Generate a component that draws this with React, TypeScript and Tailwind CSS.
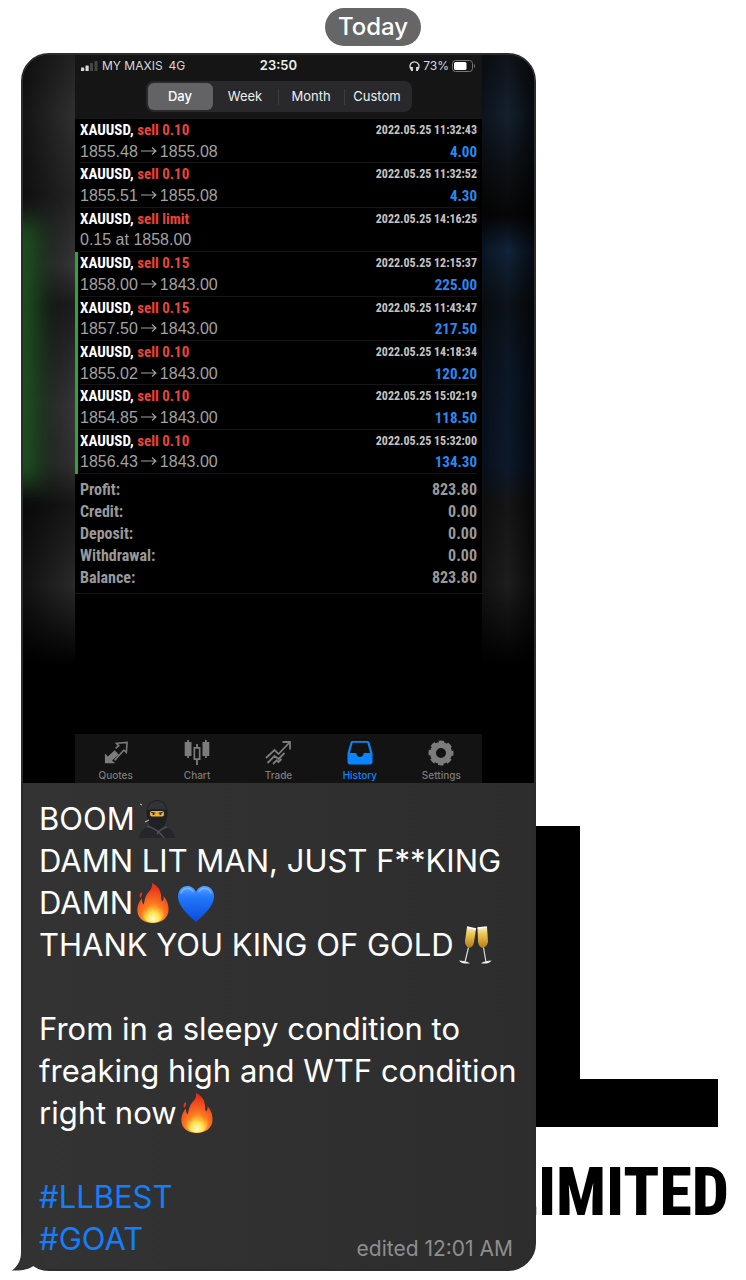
import React, { useState } from "react";

interface Trade {
  action: string;
  detail: React.ReactNode;
  time: string;
  profit?: string;
  closed?: boolean;
}

const Arrow: React.FC = () => (
  <svg viewBox="0 0 16 10" className="mx-[3px] inline-block h-[10px] w-[16px] align-baseline" fill="none" stroke="currentColor" strokeWidth="1.1">
    <path d="M0 4h15M11 0.500L15 4l-4 3.500" />
  </svg>
);

const range = (from: string, to: string) => (
  <>
    {from}
    <Arrow />
    {to}
  </>
);

const trades: Trade[] = [
  { action: "sell 0.10", detail: range("1855.48", "1855.08"), time: "2022.05.25 11:32:43", profit: "4.00" },
  { action: "sell 0.10", detail: range("1855.51", "1855.08"), time: "2022.05.25 11:32:52", profit: "4.30" },
  { action: "sell limit", detail: "0.15 at 1858.00", time: "2022.05.25 14:16:25" },
  { action: "sell 0.15", detail: range("1858.00", "1843.00"), time: "2022.05.25 12:15:37", profit: "225.00", closed: true },
  { action: "sell 0.15", detail: range("1857.50", "1843.00"), time: "2022.05.25 11:43:47", profit: "217.50", closed: true },
  { action: "sell 0.10", detail: range("1855.02", "1843.00"), time: "2022.05.25 14:18:34", profit: "120.20", closed: true },
  { action: "sell 0.10", detail: range("1854.85", "1843.00"), time: "2022.05.25 15:02:19", profit: "118.50", closed: true },
  { action: "sell 0.10", detail: range("1856.43", "1843.00"), time: "2022.05.25 15:32:00", profit: "134.30", closed: true },
];

const summary = [
  ["Profit:", "823.80"],
  ["Credit:", "0.00"],
  ["Deposit:", "0.00"],
  ["Withdrawal:", "0.00"],
  ["Balance:", "823.80"],
];

const periods = ["Day", "Week", "Month", "Custom"];

const QuotesIcon = (
  <svg viewBox="0 0 26 26" className="size-[24px]" fill="none">
    <path d="M1 24V13.500l3.200 3.200 7.300-6.700 4.500 4.500-7.300 6.700L12 24z" fill="currentColor" />
    <path d="M12.500 8l3.500-3-2.500-2.500L25 1.500l-.8 11-2.700-2.700L11.500 21" stroke="currentColor" strokeWidth="1.700" />
  </svg>
);

const ChartIcon = (
  <svg viewBox="0 0 26 26" className="size-[26px]" fill="currentColor">
    <path d="M3.200 0h1.800v2H7.500v14H5v2H3.200v-2H.7V2h2.500zM21 0h1.800v2h2.500v14h-2.500v2H21v-2h-2.500V2H21z" />
    <path d="M12.100 4h1.800v3h2.600v13h-2.600v5h-1.800v-5H9.500V7h2.600zM11.200 8.700v9.600h3.600V8.700z" fillRule="evenodd" />
  </svg>
);

const TradeIcon = (
  <svg viewBox="0 0 26 26" className="size-[26px]" fill="none" stroke="currentColor" strokeWidth="1.800">
    <path d="M1 18l8.500-8 4 4L24 3M17.500 2h7.500v7.500" />
    <path d="M2.500 23l7-7 4 3 6-6M8 24l3.500-3.500 2 1.500 3-3" />
  </svg>
);

const HistoryIcon = (
  <svg viewBox="0 0 26 26" className="size-[26px]" fill="currentColor" fillRule="evenodd">
    <path d="M5.500 1h15c1 0 1.700.6 2 1.500L25.500 13v9c0 1.500-1 2.500-2.500 2.500H3C1.500 24.500.5 23.500.5 22v-9L3.500 2.500C3.800 1.600 4.500 1 5.500 1zM5.700 2.700L2.800 13h6c.4 0 .7.4.7.8 0 1.800 1.500 3.300 3.500 3.300s3.500-1.500 3.500-3.300c0-.4.300-.8.700-.8h6L20.300 2.700z" />
  </svg>
);

const SettingsIcon = (
  <svg viewBox="0 0 26 26" className="size-[26px]" fill="none" stroke="currentColor">
    <circle cx="13" cy="13" r="8" strokeWidth="6" />
    <circle cx="13" cy="13" r="11.200" strokeWidth="2.600" strokeDasharray="5.300 3.496" strokeDashoffset="2.600" />
  </svg>
);

const tabs = [
  { name: "Quotes", icon: QuotesIcon },
  { name: "Chart", icon: ChartIcon },
  { name: "Trade", icon: TradeIcon },
  { name: "History", icon: HistoryIcon },
  { name: "Settings", icon: SettingsIcon },
];

const Fire: React.FC = () => (
  <svg viewBox="0 0 32 40" className="h-[40px] w-[32px]" role="img" aria-label="fire">
    <defs>
      <radialGradient id="flame" cx="0.5" cy="0.9" r="0.8">
        <stop offset="0.2" stopColor="#ffb52b" />
        <stop offset="0.5" stopColor="#fd7620" />
        <stop offset="1" stopColor="#e8321c" />
      </radialGradient>
      <radialGradient id="core" cx="0.5" cy="0.85" r="0.65">
        <stop offset="0" stopColor="#fffbd0" />
        <stop offset="0.45" stopColor="#ffe34a" />
        <stop offset="1" stopColor="#ff8a24" stopOpacity="0.3" />
      </radialGradient>
    </defs>
    <path d="M15 0c6 3 8.500 7 9 12 .2 3 0 5 1 6.500 1.500-1 1.800-3.500 1.500-5.500 4 4.500 5.500 9.500 5 15-.6 7-7 12-15.500 12S.8 35.500.4 28.500C0 22.500 2.500 18 5 15.500c0 3 .3 5 1.800 6C8 15 9 11.500 12.500 8 14.800 5.600 15.500 3 15 0z" fill="url(#flame)" />
    <path d="M4.500 9c1.500 2.500 0 4-1.200 6-1.500-2-.8-4.500 1.200-6z" fill="#e8321c" />
    <path d="M17 16c.5 5 5 7.500 6.500 11 .8-1 1-2.500.8-4 3 4 3.500 8.500 1 12-2 3-5.500 4.500-9.500 4.500-5 0-9-2.500-10.300-6.500-1-3.500 0-6 2-8.500.2 2 .8 3.500 2 4.500C10 24 15.500 21 17 16z" fill="url(#core)" />
  </svg>
);

const BlueHeart: React.FC = () => (
  <svg viewBox="0 0 38 37" className="h-[37px] w-[38px]" role="img" aria-label="blue heart">
    <defs>
      <linearGradient id="heart" x1="0" y1="0" x2="0" y2="1">
        <stop offset="0" stopColor="#5aa5ff" />
        <stop offset="0.3" stopColor="#2478fb" />
        <stop offset="1" stopColor="#0b4bdc" />
      </linearGradient>
    </defs>
    <path d="M19 37C12 30.500 1 21.500 1 11.500 1 5 5.500 1 10.500 1c4 0 7 2.500 8.500 6 1.500-3.500 4.500-6 8.500-6C32.500 1 37 5 37 11.500 37 21.500 26 30.500 19 37z" fill="url(#heart)" />
    <path d="M4 8c2-5 9-6.500 12-1.500M22 6.500C25 1.500 32 3 34 8" fill="none" stroke="#8cc4ff" strokeWidth="1.500" strokeLinecap="round" opacity="0.6" />
  </svg>
);

const Ninja: React.FC = () => (
  <svg viewBox="0 0 36 38" className="h-[38px] w-[36px]" role="img" aria-label="ninja">
    <path d="M0 38c1-7 5-10 11-11h14c6 1 10 4 11 11z" fill="#24262a" />
    <path d="M18 0C11.500 0 7.500 5 7.500 13c0 9 4.500 17 10.500 17s10.500-8 10.500-17C28.500 5 24.500 0 18 0z" fill="#1f2125" />
    <path d="M12 3c3.500-2.500 9-2.500 12 0 2 2 3 4.500 3.300 7-5-1.500-13.500-1.500-18.600 0C9 7.500 10 5 12 3z" fill="#303337" />
    <rect x="11" y="11" width="14" height="5.500" rx="1.800" fill="#f0b32c" />
    <path d="M12 12.200l4.500.9M24 12.200l-4.500.9" stroke="#493114" strokeWidth="1" />
    <circle cx="14.500" cy="14" r="1.100" fill="#332210" />
    <circle cx="21.500" cy="14" r="1.100" fill="#332210" />
    <path d="M8 26c7 2 13 6 17 12M28 27c-4 1-8 4-10 7" fill="none" stroke="#4c5056" strokeWidth="1.500" />
    <path d="M6 22l4-2M1 4l2 1" stroke="#c8cdd2" strokeWidth="1" />
  </svg>
);

const Glasses: React.FC = () => (
  <svg viewBox="0 0 34 38" className="h-[38px] w-[34px]" role="img" aria-label="clinking glasses">
    <defs>
      <linearGradient id="fizz" x1="0" y1="0" x2="0" y2="1">
        <stop offset="0" stopColor="#f8efcd" />
        <stop offset="0.35" stopColor="#edc654" />
        <stop offset="1" stopColor="#b57d16" />
      </linearGradient>
    </defs>
    <path d="M9 1l9 2-2 13c-.5 4-3 6-5 5.600S7 19 7 15z" fill="url(#fizz)" />
    <path d="M29 1l-9.500 1 .5 13.500c.4 4 2.600 6.500 4.800 6.300S29.500 19 30 15.500z" fill="url(#fizz)" />
    <path d="M9 1l9 2M19.500 2L29 1" stroke="#fff" strokeWidth="1.300" />
    <path d="M10.500 21.500L7 36M25.500 21.500L28 36" stroke="#d9dce0" strokeWidth="1.200" />
    <path d="M1 34.500c3 0 8 1 11 2.800-4 .8-9 .2-11-2.800zM33.500 34.500c-3 0-8 1-10.500 2.800 4 .8 8.500.2 10.500-2.800z" fill="#eceef0" />
  </svg>
);

const StatusBar: React.FC = () => (
  <div className="grid h-[22px] grid-cols-3 items-center px-[6px] text-xs text-[#d8d8d8]">
    <div className="flex items-center gap-1 whitespace-nowrap">
      <svg viewBox="0 0 17 10" className="h-[10px] w-[17px]" fill="currentColor">
        <rect x="0" y="6.500" width="3.200" height="3.500" rx="0.5" />
        <rect x="4.500" y="4.500" width="3.200" height="5.500" rx="0.5" />
        <rect x="9" y="2" width="3" height="8" rx="0.5" opacity="0.25" />
        <rect x="13.500" y="0" width="3" height="10" rx="0.5" opacity="0.25" />
      </svg>
      <span>MY MAXIS</span>
      <span className="ml-[2px]">4G</span>
    </div>
    <span className="text-center text-[13px] font-semibold text-[#eeeeee]">23:50</span>
    <div className="flex items-center justify-end gap-[3px]">
      <svg viewBox="0 0 12 12" className="size-[11px]" fill="none" stroke="currentColor" strokeWidth="1.500">
        <path d="M2.500 9.500C-.5 5 2 1 6 1s6.500 4 3.500 8.500" />
        <path d="M3.200 6.500v4.500M8.800 6.500v4.500" strokeWidth="2.200" />
      </svg>
      <span>73%</span>
      <svg viewBox="0 0 24 12" className="h-[12px] w-[24px]" fill="none">
        <rect x="0.5" y="0.5" width="20" height="11" rx="3" stroke="#777777" />
        <rect x="2" y="2" width="12.500" height="8" rx="1.500" fill="#ffffff" />
        <path d="M22 4v4c1.500-.6 1.500-3.400 0-4z" fill="#777777" />
      </svg>
    </div>
  </div>
);

const TradeScreen: React.FC = () => {
  const [period, setPeriod] = useState<string>("Day");
  const [tab, setTab] = useState<string>("History");

  return (
    <div className="flex min-w-0 flex-1 flex-col bg-black">
      <div className="bg-[#151515] pb-[7px]">
        <StatusBar />
        <div className="mx-auto mt-[4px] flex h-[31px] w-[266px] items-center rounded-lg bg-[#29292b] p-[2px]">
          {periods.map((name, i) => (
            <React.Fragment key={name}>
              {i > 1 && <span className="h-[16px] w-px bg-[#3c3c3e]" />}
              <button
                type="button"
                aria-pressed={period === name}
                onClick={() => setPeriod(name)}
                className={
                  period === name
                    ? "h-full flex-1 rounded-md bg-[#636366] text-[13px] font-medium text-white"
                    : "h-full flex-1 text-[13px] text-[#eeeeee]"
                }
              >
                {name}
              </button>
            </React.Fragment>
          ))}
        </div>
      </div>

      <ul className="flex h-[355px] flex-col font-['Roboto_Condensed','Liberation_Sans',sans-serif] text-[15px] leading-[20px]">
        {trades.map((trade) => (
          <li
            key={trade.time}
            className={
              trade.closed
                ? "flex flex-1 flex-col border-l-[3px] border-[#28a83c] pr-[5px] pl-[2px]"
                : "flex flex-1 flex-col pr-[5px] pl-[5px]"
            }
          >
            <div className="flex h-[22px] items-center justify-between font-bold">
              <span className="text-white">
                XAUUSD, <span className="text-[#e8453c]">{trade.action}</span>
              </span>
              <span className="text-[12px] text-[#c4c4c4]">{trade.time}</span>
            </div>
            <div className="flex flex-1 items-center justify-between border-b border-[#161616]">
              <span className="font-['Liberation_Sans',sans-serif] text-[16px] text-[#a2a2a2]">{trade.detail}</span>
              {trade.profit && <span className="font-bold text-[#2d87f0]">{trade.profit}</span>}
            </div>
          </li>
        ))}
      </ul>

      <dl className="border-b border-[#161616] px-[5px] pt-[5px] pb-[4px] font-['Roboto_Condensed','Liberation_Sans',sans-serif] text-[16px] leading-[22px] font-bold text-[#999999]">
        {summary.map(([label, value]) => (
          <div key={label} className="flex justify-between">
            <dt>{label}</dt>
            <dd>{value}</dd>
          </div>
        ))}
      </dl>

      <nav className="mt-[140px] grid grid-cols-5 bg-[#131313] pt-[6px]">
        {tabs.map(({ name, icon }) => (
          <button
            key={name}
            type="button"
            onClick={() => setTab(name)}
            className={
              tab === name
                ? "flex flex-col items-center gap-[2px] text-[10px] leading-[15px] font-medium text-[#0a84ff]"
                : "flex flex-col items-center gap-[2px] text-[10px] leading-[15px] font-medium text-[#7c7c7c]"
            }
          >
            <span className="flex size-[26px] items-center justify-center">{icon}</span>
            {name}
          </button>
        ))}
      </nav>
    </div>
  );
};

const Line: React.FC<{ children?: React.ReactNode }> = ({ children }) => (
  <p className="flex h-[42px] items-center gap-1 whitespace-nowrap">{children}</p>
);

const Message: React.FC = () => (
  <article className="relative z-10 col-start-1 row-start-1 mr-[210px] ml-[21px] min-w-0">
    <div className="overflow-hidden rounded-[28px] border-2 border-[#2c2c2c] bg-linear-to-r from-[#333333] to-[#2d2d2d]">
      <div className="flex bg-black">
        <div className="w-[52px] shrink-0 overflow-hidden bg-[linear-gradient(to_right,#00000099,transparent),linear-gradient(#222222,#303030_60px,#242424_140px,#363636_210px,#1c1c1c_250px,#363636_350px,#303030_410px,#161616_450px,#2a2a2a_530px,#000000_610px)]">
          <div className="mt-[165px] -ml-[20px] h-[265px] w-[36px] bg-[#1e5522] blur-[12px]" />
        </div>
        <TradeScreen />
        <div className="w-[52px] shrink-0 bg-[linear-gradient(to_right,#00000066,transparent_50%,#000000aa),linear-gradient(#10141a,#14202e_60px,#0b0d10_130px,#060606_160px,#10233a_195px,#0d1218_250px,#0c1726_310px,#0d192b_410px,#151515_450px,#1d1d1d_530px,#000000_610px)]" />
      </div>
      <div className="px-4 pt-[15px] text-[31px] leading-[42px] text-white">
        <Line>
          BOOM
          <Ninja />
        </Line>
        <Line>DAMN LIT MAN, JUST F**KING</Line>
        <Line>
          DAMN
          <Fire />
          <span className="ml-1">
            <BlueHeart />
          </span>
        </Line>
        <Line>
          THANK YOU KING OF GOLD
          <Glasses />
        </Line>
        <Line />
        <Line>From in a sleepy condition to</Line>
        <Line>freaking high and WTF condition</Line>
        <Line>
          right now
          <Fire />
        </Line>
        <Line />
        <Line>
          <a href="#llbest" className="text-[#147efb]">#LLBEST</a>
        </Line>
        <div className="flex h-[51px] justify-between">
          <a href="#goat" className="text-[#147efb]">#GOAT</a>
          <span className="self-end pr-[5px] pb-[5px] text-[21px] leading-[30px] text-[#8e8e8e]">edited 12:01 AM</span>
        </div>
      </div>
    </div>
    {/* bubble tail */}
    <svg viewBox="0 0 40 32" className="absolute bottom-0 -left-[9px] h-[32px] w-[40px]" fill="#323232">
      <path d="M9 0v13c0 8-3 14-9 18.500 9 .5 17-1 22-5 4 2.500 6 4 12 5L26 0z" />
    </svg>
  </article>
);

const Backdrop: React.FC = () => (
  <div className="col-start-1 row-start-1 mr-[17px] mb-[40px] flex flex-col items-end gap-[28px] self-end justify-self-end text-black">
    <svg viewBox="0 0 240 301" className="mr-[11px] h-[301px] w-[240px]">
      <path d="M0 0h102v253h138v48H0z" />
    </svg>
    <span className="font-['Roboto_Condensed','Liberation_Sans',sans-serif] text-[66px] leading-[76px] font-extrabold">
      LIMITED
    </span>
  </div>
);

const App: React.FC = () => {
  return (
    <main className="min-h-screen overflow-hidden bg-white pt-[8px] font-['Inter',sans-serif]">
      <time className="mx-auto block h-[38px] w-fit rounded-full bg-[#666666] px-[13px] text-2xl leading-[38px] font-medium text-white">
        Today
      </time>
      <div className="mt-[7px] grid grid-cols-1">
        <Backdrop />
        <Message />
      </div>
    </main>
  );
};

export default App;
